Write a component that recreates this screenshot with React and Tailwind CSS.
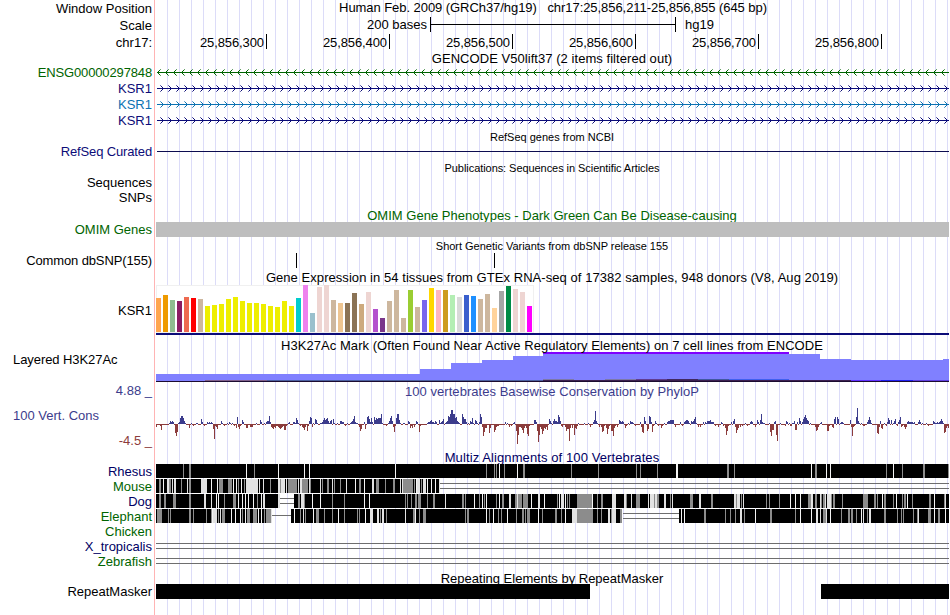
import React from "react";

const LEFT = 156;
const WIDTH = 793;

const GTEX = `ffa54f 34,ee9a00 37,8fbc8f 32,8b1c62 31,ee6a50 35,ff0000 34,cdb79e 33,eeee00 26,eeee00 27,eeee00 28,eeee00 33,eeee00 35,eeee00 31,eeee00 29,eeee00 29,eeee00 28,eeee00 26,eeee00 25,eeee00 31,eeee00 26,00cdcd 34,ee82ee 47,9ac0cd 19,eed5d2 45,eed5d2 47,cdb79e 32,eec591 29,8b7355 29,8b7355 39,cdaa7d 28,eed5d2 40,b452cd 23,7a378b 14,cdb79e 31,cdb79e 42,cdb79e 14,9acd32 42,cdb79e 25,7a67ee 32,ffd700 44,ffb6c1 42,cd9b1d 42,b4eeb4 37,d9d9d9 35,3a5fcd 37,1e90ff 36,cdb79e 33,cdb79e 38,ffd39b 24,a6a6a6 41,008b45 46,eed5d2 43,eed5d2 40,ff00ff 26`
  .split(",")
  .map((s) => s.split(" "));

// Conservation score per base pixel: "x:height", negative values hang below the axis.
const PHYLOP = `156:-3,160:-2,161:-6,169:1,170:3,171:2,172:3,173:2,175:-9,176:-12,177:-8,178:1,179:2,180:6,181:8,182:8,183:6,184:3,185:1,189:-4,191:1,193:-2,196:1,197:1,201:5,202:2,204:-2,207:2,208:1,209:2,210:1,211:2,212:1,213:-5,214:-15,215:-2,216:-3,217:-5,221:3,222:1,224:-2,227:1,229:2,230:1,232:1,234:-2,236:-4,237:7,238:-3,239:-5,240:-2,242:4,243:2,246:-4,247:-4,250:-3,251:-3,252:-3,256:1,260:4,261:2,264:1,266:2,267:3,268:3,269:8,270:2,271:-3,272:-4,273:-5,274:-3,275:-4,276:-2,277:-2,278:-3,279:-4,280:-5,281:-4,282:-3,283:-2,284:-6,285:-6,286:-2,288:1,289:2,293:2,294:2,295:1,296:6,297:4,298:1,300:-2,302:-3,303:-4,304:-6,305:-3,307:-7,308:-2,309:3,310:7,311:6,312:-3,313:1,315:5,316:4,317:1,320:1,321:1,322:2,323:4,324:6,325:4,326:5,327:6,328:3,329:1,330:3,331:4,333:5,334:1,337:1,340:3,341:3,342:2,343:2,345:-2,347:1,350:1,351:2,352:3,353:5,354:8,355:2,356:1,357:1,359:-3,360:-7,361:-5,364:2,365:-5,367:7,368:8,369:5,370:2,371:6,372:2,374:7,375:4,376:6,377:5,378:6,379:6,380:6,381:10,382:1,386:-2,388:1,389:3,390:6,391:8,392:3,393:-3,394:-8,395:-2,396:6,397:10,398:10,399:4,400:1,403:1,404:1,408:3,409:2,410:-4,411:-2,412:-4,414:-3,416:3,417:2,419:-8,420:-2,427:1,428:2,429:2,430:3,431:4,432:2,433:2,434:1,435:3,436:2,439:4,440:1,441:2,442:3,443:5,445:1,446:2,447:3,448:8,449:7,450:10,451:14,452:14,453:10,454:10,455:6,456:7,457:3,458:2,459:1,462:10,463:7,464:5,465:5,466:2,468:1,470:3,471:2,472:6,473:1,475:4,476:3,477:1,479:2,480:10,481:7,482:-3,483:-12,484:-8,485:-4,486:-4,487:-1,489:-9,490:-4,494:-8,495:-6,496:-3,497:-2,498:-2,505:2,507:1,509:-3,511:-2,513:1,514:2,516:-7,517:-20,518:-11,519:-3,520:-3,521:-4,522:-6,523:-9,524:-4,525:-2,526:-4,527:-10,528:-12,529:-2,534:4,535:4,536:2,537:-7,538:-18,539:-11,540:-3,541:-5,542:-10,543:-7,544:-4,545:-5,546:-3,547:-6,549:5,550:3,551:1,553:3,554:5,555:3,556:3,557:2,558:9,559:7,560:3,561:-2,562:-3,565:-3,566:-7,567:-5,568:-5,569:-17,570:-4,572:-4,574:-11,575:-4,576:-5,577:-2,578:1,584:1,588:1,590:-3,593:2,594:4,595:13,596:3,597:1,599:-3,601:-3,602:-8,603:-7,604:-2,606:-4,607:-10,608:-5,609:-2,611:-7,612:-7,613:-12,614:-4,615:-2,617:-3,619:4,620:3,621:2,622:3,623:2,625:-4,626:-2,628:1,630:3,631:2,632:2,633:1,635:-2,640:2,641:-3,642:-8,643:-9,644:7,645:3,647:-7,648:-5,649:8,650:7,651:2,652:-8,653:-2,655:3,656:1,658:-2,661:-4,662:-2,664:1,667:2,668:3,669:3,670:4,671:4,672:4,673:4,675:-3,680:2,682:-2,684:2,685:3,686:4,687:4,688:3,689:1,691:3,692:2,693:3,694:5,695:7,696:1,698:-3,700:-3,703:2,705:2,706:1,707:3,708:3,709:3,710:4,711:2,712:2,713:2,715:-2,718:-3,721:2,722:1,723:-2,725:-4,726:-11,727:-7,728:-2,731:2,733:3,734:5,735:-3,736:-9,737:-6,738:-4,740:-3,742:-2,745:1,747:-2,750:2,751:3,752:2,755:-3,757:4,758:2,760:4,761:10,762:2,763:1,764:1,769:1,770:-8,771:-12,772:-6,773:-6,774:2,775:3,776:-11,777:-17,780:1,785:-2,786:3,787:2,789:1,790:-2,791:-2,792:1,793:1,794:3,795:-6,796:-6,797:2,799:6,800:3,802:2,803:5,804:7,805:9,806:6,807:4,808:3,810:1,815:-3,816:-7,817:-6,818:-3,820:1,821:2,827:-7,828:-7,829:-2,832:-3,833:-4,834:5,835:7,837:7,838:5,840:1,841:2,842:2,843:1,850:4,851:-3,852:-12,853:-3,854:-2,856:7,857:16,858:3,859:1,861:1,863:-2,864:-2,867:2,868:4,869:7,870:4,871:1,877:-9,878:-10,879:-3,880:3,881:-4,882:-5,884:1,886:-2,887:2,888:6,889:4,891:4,893:1,894:3,895:5,897:-2,898:2,899:4,900:7,901:-3,902:-2,904:-3,905:-5,906:-3,907:2,908:3,909:2,910:2,911:2,912:2,913:1,914:2,918:2,919:4,920:2,922:1,926:1,928:-2,933:3,934:2,935:1,936:1,937:2,938:1,939:2,940:3,941:5,942:3,943:1,944:-9,945:-8,946:-4,947:-2,948:-4`;

const scores = new Array(WIDTH).fill(-1);
PHYLOP.split(",").forEach((s) => {
  const [x, h] = s.split(":").map(Number);
  scores[x - LEFT] = h;
});

// Alignment quality stripes: x, tone (g grey, l light, w near-white) and width.
const RHESUS = "183g1 189g2 246w1 254g1 278w1 304w1 309w1 395w1 486g1 494g1 496g1 499w1 504g1 517w1 523g2 571g1 598g1 636g1 640g1 657g1 676w2 727g2 734g1 811w1 815g2 826w1 830w1 886g1 893w1 902g1 923g2 948g1";
const MOUSE = "159g2 163w1 167l2 169g2 172l1 174l2 181g1 187l1 189g2 201l6 211w1 217w1 219g4 228g4 233w1 236w1 238g1 241w1 244g1 246l12 259l1 263l1 270g1 278l2 280g1 281l4 286l1 288g9 298l1 300l2 302g6 309l1 310g1 320l1 322g1 327g2 332l1 334g1 340g1 346l1 355w1 359g2 364w1 372l2 376g3 385g1 393g2 400l1 402l1 403g10 414g1 416w1 417l3 421g1 423l3 427w1 431w1 435w1 439l1";
const DOG = "159g2 164g2 173g3 189g2 204l2 211l1 216w1 218w1 224g1 233g3 238w1 242w1 245w1 248w1 253w1 257g1 261w1 263l2 278l2 298g2 301l3 304g1 312w1 320w1 332g1 344g1 364w1 369w1 405g1 407g1 411g1 415g2 418g3 427g1 433g2 445l1 462g2 465g1 474w1 479g1 482w1 484g1 486w1 496g1 499w1 502g2 509l2 515g2 517l1 518g4 523g5 531w1 538l2 544w1 557g1 559w1 561l3 565w1 567g1 569g1 577g15 592w1 597g1 601g2 612l4 624l2 626g1 631l1 636g4 648l1 650l4 654g1 655l2 657g2 664l2 670g1 672l1 690g3 699l2 711g2 734l2 736g1 737l3 741g1 743l1 766g1 769g1 779g1 790w1 795w1 800w1 808g3 811l2 815g2 820l1 821g1 823g2 825l1 827l4 831g1 833g2 842g1 863g5 874g2 877g1 882w1 884g2 893g1 896w1 902g1 904g2 907w1 912g1 929g2 934w1 944g1 945l1";
const ELEPHANT = "157g1 158g4 168g1 170g1 189g2 193g1 206g1 211g1 212w1 213l4 218g1 220l1 222g3 231w1 235w1 240w1 242g1 245w1 247g3 253g4 258w1 261w1 264g1 266g5 271l1 294w1 300g1 303l1 305g1 313w1 316g3 324g1 332g1 338w1 344g1 357g1 359g1 365w1 370l3 377l2 380g1 382l2 386g1 405l1 413g2 415w1 419g1 423g3 465g1 467g2 486w1 489g1 493w1 498g1 501g1 507w1 516g1 522g2 525g1 527g3 538w1 542g1 555g2 561g1 565w1 572l5 577g16 597g1 601g1 608l2 611g1 612l4 620g2 681w1 684w1 704g2 725g1 730g1 735g1 740l2 744g1 755w1 770g2 795g1 800w1 811w1 816l2 820l1 823g3 826l1 830w1 841g1 848g2 851g2 856g1 861w1 863l1 867g1 869l2 884g2 897g1 901g1 903g1 913g1 917g1 918l1 928g3 934w1 938g2 945w1";
const TONES = { g: "#8c8c8c", l: "#e2e2e2", w: "#f4f4f4" };

function Plot({ height, children }) {
  return (
    <svg
      className="block shrink-0"
      width={WIDTH}
      height={height}
      viewBox={`${LEFT} 0 ${WIDTH} ${height}`}
      shapeRendering="crispEdges"
    >
      {children}
    </svg>
  );
}

function Row({ label, h, children, tone = "text-black", fit = "" }) {
  return (
    <div className={`flex gap-1 ${h}`}>
      <div className={`flex w-[152px] shrink-0 items-center justify-end ${tone}`}>
        <span className={fit}>{label}</span>
      </div>
      <div className="min-w-0 grow">{children}</div>
    </div>
  );
}

function Title({ h, children, className = "", shift = "pt-px" }) {
  return (
    <div className={`flex items-center justify-center pl-[156px] pr-0.5 ${h} ${shift}`}>
      <span className={className}>{children}</span>
    </div>
  );
}

function GeneLine({ color, reverse }) {
  const arrows = Array.from({ length: 99 }, (_, i) => {
    const tip = (reverse ? 157 : 163) + i * 8;
    const s = reverse ? 1 : -1;
    return [1, 2, 3].map((k) => (
      <React.Fragment key={`${i}-${k}`}>
        <rect x={tip + s * k} y={8 - k} width="1" height="1" fill={color} opacity={k === 3 ? 0.6 : 1} />
        <rect x={tip + s * k} y={8 + k} width="1" height="1" fill={color} opacity={k === 3 ? 0.6 : 1} />
      </React.Fragment>
    ));
  });
  return (
    <Plot height={16}>
      <rect x="157" y="8" width="792" height="1" fill={color} />
      {arrows}
    </Plot>
  );
}

function Alignment({ spans, stripes, gaps = [] }) {
  return (
    <Plot height={15}>
      {spans.map(([a, b]) => (
        <rect key={a} x={a} y="0" width={b - a} height="14" fill="#000" />
      ))}
      {stripes.split(" ").map((s) => {
        const [, x, t, w] = s.match(/(\d+)([glw])(\d+)/);
        return <rect key={x} x={x} y="0" width={w} height="14" fill={TONES[t]} />;
      })}
      {gaps.map(([a, b, ys]) =>
        ys.map((y) => <rect key={`${a}-${y}`} x={a} y={y} width={b - a} height="1" fill="#6e6e6e" />)
      )}
    </Plot>
  );
}

function DoubleLine() {
  return (
    <Plot height={15}>
      <rect x="156" y="4" width="793" height="1" fill="#6e6e6e" />
      <rect x="156" y="9" width="793" height="1" fill="#6e6e6e" />
    </Plot>
  );
}

const H3K = [
  [156, 420, 374], [420, 451, 369], [451, 482, 363], [482, 513, 360], [513, 543, 356],
  [543, 789, 352], [789, 820, 354], [820, 851, 359], [851, 943, 360], [943, 949, 359],
];

const POSITIONS = ["25,856,300", "25,856,400", "25,856,500", "25,856,600", "25,856,700", "25,856,800"];

export default function App() {
  return (
    <div className="relative isolate h-[615px] w-[950px] overflow-hidden whitespace-pre bg-white font-['Liberation_Sans',Arial,sans-serif] text-[13px] leading-[15px] text-black">
      <div className="absolute inset-y-0 left-[154px] -z-10 w-px bg-[#ffb4b4]" />
      <div className="absolute inset-y-0 left-[167px] right-px -z-10 bg-[repeating-linear-gradient(to_right,#dcdcf8_0_1px,transparent_1px_12px)]" />

      <Row label="Window Position" h="h-[17px]">
        <div className="flex h-full items-center justify-center pb-0.5">
          <span className="tracking-[-0.06px]">Human Feb. 2009 (GRCh37/hg19)   chr17:25,856,211-25,856,855 (645 bp)</span>
        </div>
      </Row>
      <Row label="Scale" h="h-[17px]">
        <div className="flex h-full items-center">
          <div className="w-[271px] shrink-0 pb-0.5 text-right">200 bases</div>
          <div className="ml-[3px] flex h-[15px] w-[246px] shrink-0 items-center self-start border-x border-black">
            <div className="h-px w-full bg-black" />
          </div>
          <div className="ml-[9px] pb-0.5">hg19</div>
        </div>
      </Row>
      <Row label="chr17:" h="h-[17px]">
        <div className="flex h-full">
          {POSITIONS.map((p, i) => (
            <div
              key={p}
              className={`flex h-[15px] shrink-0 items-start justify-end border-r border-black pr-0.5 pt-px ${i === 0 ? "w-[111px]" : "w-[123px]"}`}
            >
              <span className="tracking-[-0.1px]">{p}</span>
            </div>
          ))}
        </div>
      </Row>
      <Title h="h-[13px]" className="tracking-[0.05px]">GENCODE V50lift37 (2 items filtered out)</Title>
      <Row label="ENSG00000297848" h="h-4" fit="tracking-[-0.14px]" tone="text-[#006400]"><GeneLine color="#006400" reverse /></Row>
      <Row label="KSR1" h="h-4" tone="text-[#0c0c78]"><GeneLine color="#0c0c78" /></Row>
      <Row label="KSR1" h="h-4" tone="text-[#0c72b2]"><GeneLine color="#0c72b2" /></Row>
      <Row label="KSR1" h="h-4" tone="text-[#0c0c78]"><GeneLine color="#0c0c78" /></Row>
      <Title h="h-4" shift="pt-[3px]" className="text-[11px]">RefSeq genes from NCBI</Title>
      <Row label="RefSeq Curated" h="h-[15px]" fit="tracking-[-0.14px]" tone="text-[#0c0c78]">
        <Plot height={15}><rect x="157" y="7" width="792" height="1" fill="#0c0c50" /></Plot>
      </Row>
      <Title h="h-[17px]" className="text-[11px] tracking-[-0.06px]">Publications: Sequences in Scientific Articles</Title>
      <Row label="Sequences" h="h-[13px]" />
      <Row label="SNPs" h="h-[17px]" />
      <Title h="h-4" shift="pt-[3px]" className="tracking-[0.02px] text-[#006400]">OMIM Gene Phenotypes - Dark Green Can Be Disease-causing</Title>
      <Row label="OMIM Genes" h="h-[15px]" tone="text-[#006400]">
        <div className="mr-px h-full bg-[#bebebe]" />
      </Row>
      <Title h="h-4" shift="pt-0.5" className="text-[11px] tracking-[-0.02px]">Short Genetic Variants from dbSNP release 155</Title>
      <Row label="Common dbSNP(155)" h="h-[15px]" fit="tracking-[-0.12px]">
        <Plot height={15}>
          <rect x="296" y="0" width="1" height="15" />
          <rect x="494" y="0" width="1" height="15" />
        </Plot>
      </Row>
      <Title h="h-[17px]" shift="pt-0.5" className="tracking-[0.055px]">Gene Expression in 54 tissues from GTEx RNA-seq of 17382 samples, 948 donors (V8, Aug 2019)</Title>
      <Row label="KSR1" h="h-[50px]">
        <Plot height={50}>
          <rect x="156" y="0" width="378" height="48" fill="#f0f0f0" />
          <rect x="157" y="1" width="376" height="46" fill="#fff" />
          {GTEX.map(([c, h], i) => (
            <rect key={i} x={156 + i * 7} y={47 - h} width="5" height={h} fill={`#${c}`} />
          ))}
          <rect x="156" y="48" width="793" height="2" fill="#0c0c78" />
        </Plot>
      </Row>
      <div className="relative z-10">
        <Title h="h-[17px]" shift="pt-1" className="tracking-[0.05px]">H3K27Ac Mark (Often Found Near Active Regulatory Elements) on 7 cell lines from ENCODE</Title>
      </div>
      <div className="flex h-[30px] gap-1">
        <div className="w-[152px] shrink-0 pl-[13px] tracking-[-0.07px]">Layered H3K27Ac</div>
        <Plot height={30}>
          {H3K.map(([a, b, y]) => (
            <rect key={a} x={a} y={y - 352} width={b - a} height={382 - y} fill="#8080ff" />
          ))}
          <rect x="543" y="0" width="246" height="2" fill="#8000ff" />
          <rect x="205" y="28" width="62" height="1" fill="#80608c" />
          <rect x="267" y="28" width="276" height="1" fill="#4c60a0" />
          <rect x="543" y="27" width="31" height="1" fill="#7c78a8" />
          <rect x="605" y="27" width="31" height="1" fill="#7c78a8" />
          <rect x="636" y="27" width="31" height="1" fill="#603c90" />
          <rect x="667" y="27" width="31" height="1" fill="#402860" />
          <rect x="698" y="27" width="31" height="1" fill="#4058a0" />
          <rect x="729" y="27" width="60" height="1" fill="#4060f0" />
          <rect x="543" y="28" width="308" height="1" fill="#3c2050" />
          <rect x="851" y="28" width="30" height="1" fill="#6030ff" />
          <rect x="881" y="28" width="32" height="1" fill="#2020f0" />
          <rect x="913" y="28" width="36" height="1" fill="#6040e0" />
          <rect x="156" y="29" width="793" height="1" fill="#1c0c30" />
        </Plot>
      </div>
      <Title h="h-[15px]" shift="pt-[3px]" className="tracking-[0.04px] text-[#3c3c8c]">100 vertebrates Basewise Conservation by PhyloP</Title>
      <div className="flex h-[53px] gap-1">
        <div className="-mt-[14px] flex w-[152px] shrink-0 flex-col gap-[10px]">
          <div className="text-right text-[#3c3c8c]">4.88 _</div>
          <div className="pl-[13px] text-[#3c3c8c]">100 Vert. Cons</div>
          <div className="text-right text-[#8c3c3c]">-4.5 _</div>
        </div>
        <Plot height={53}>
          {scores.map((v, i) => (
            <rect
              key={i}
              x={LEFT + i}
              y={v > 0 ? 27 - v : 27}
              width="1"
              height={Math.abs(v)}
              fill={v > 0 ? "#3c3c8c" : "#8c3c3c"}
            />
          ))}
        </Plot>
      </div>
      <Title h="h-[14px]" className="tracking-[0.1px] text-[#000064]">Multiz Alignments of 100 Vertebrates</Title>
      <Row label="Rhesus" h="h-[15px]" tone="text-[#000064]">
        <Alignment spans={[[156, 949]]} stripes={RHESUS} />
      </Row>
      <Row label="Mouse" h="h-[15px]" tone="text-[#006400]">
        <Alignment spans={[[156, 439]]} stripes={MOUSE} gaps={[[440, 949, [4, 9]]]} />
      </Row>
      <Row label="Dog" h="h-[15px]" tone="text-[#000064]">
        <Alignment spans={[[156, 279], [294, 949]]} stripes={DOG} gaps={[[280, 294, [4, 9]]]} />
      </Row>
      <Row label="Elephant" h="h-[15px]" tone="text-[#006400]">
        <Alignment spans={[[156, 272], [291, 622], [679, 949]]} stripes={ELEPHANT} gaps={[[272, 291, [6]], [623, 679, [4, 9]]]} />
      </Row>
      <Row label="Chicken" h="h-[15px]" tone="text-[#006400]" />
      <Row label="X_tropicalis" h="h-[15px]" tone="text-[#000064]"><DoubleLine /></Row>
      <Row label="Zebrafish" h="h-[15px]" tone="text-[#006400]"><DoubleLine /></Row>
      <Title h="h-[15px]" shift="pt-[3px]">Repeating Elements by RepeatMasker</Title>
      <Row label="RepeatMasker" h="h-[15px]">
        <Plot height={15}>
          <rect x="156" y="0" width="434" height="15" />
          <rect x="821" y="0" width="128" height="15" />
        </Plot>
      </Row>
    </div>
  );
}
